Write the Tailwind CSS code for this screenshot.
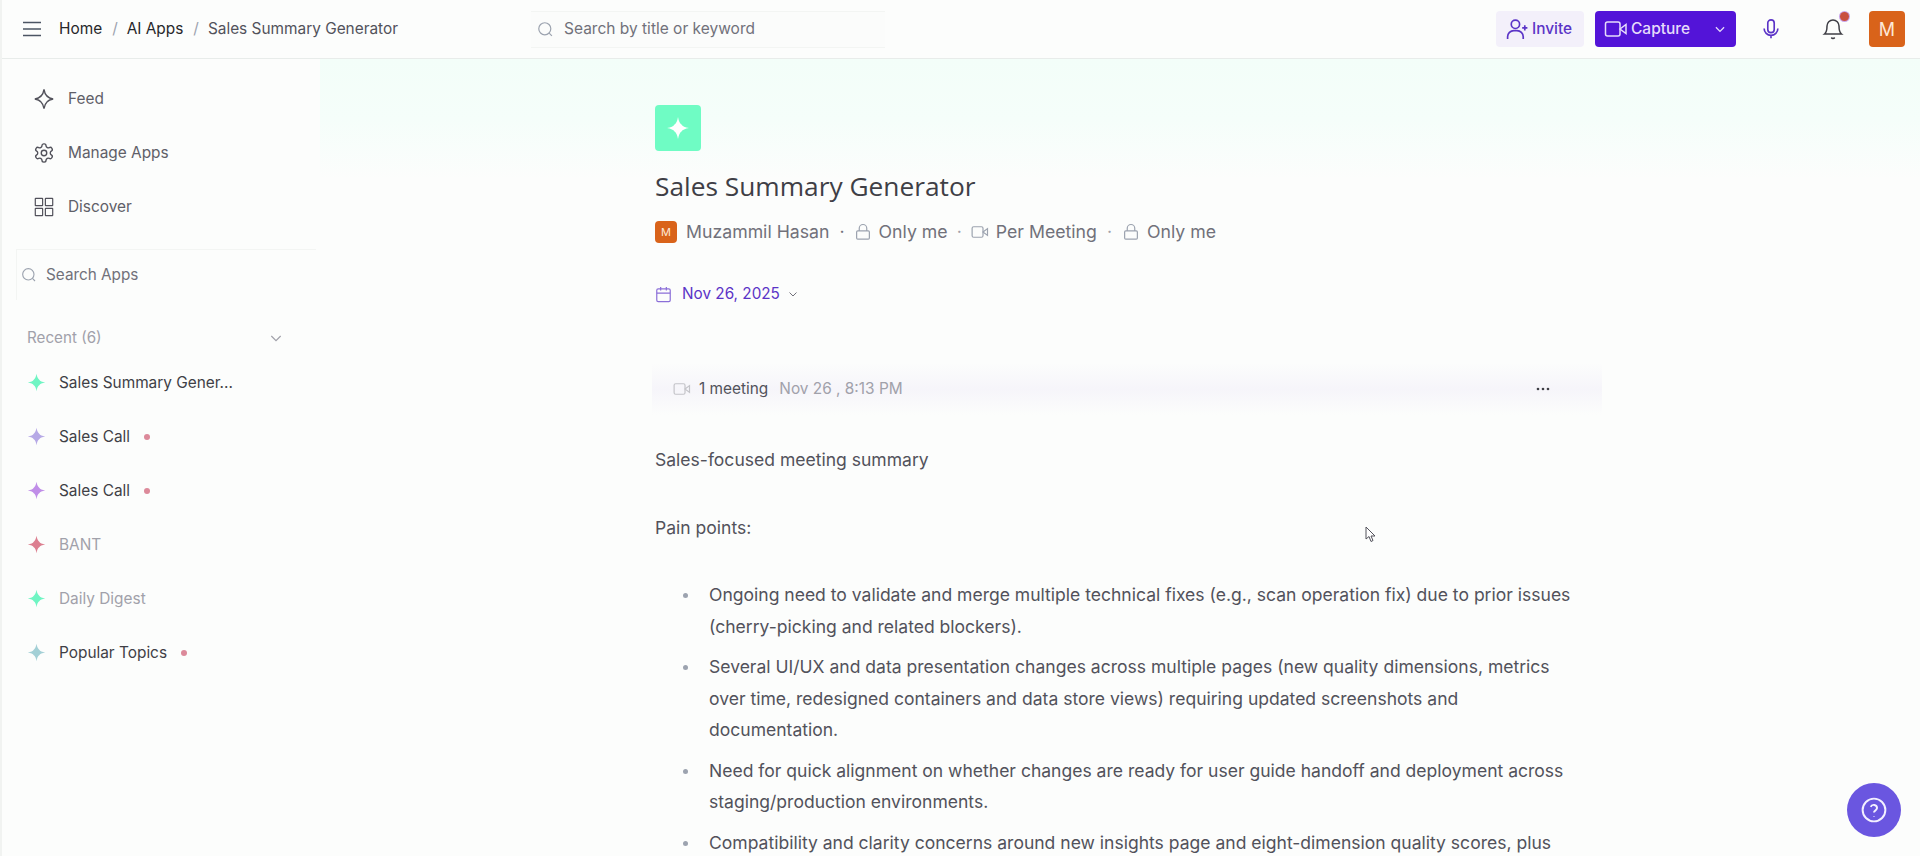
<!DOCTYPE html>
<html lang="en">
<head>
    <meta charset="UTF-8">
    <meta name="viewport" content="width=device-width, initial-scale=1.0">
    <title>Sales Summary Generator</title>
    <script src="https://cdn.jsdelivr.net/npm/@tailwindcss/browser@4"></script>
</head>
<body class="bg-[#fcfdfc] font-['Inter',sans-serif] text-[#3f3f46] h-screen overflow-hidden">
    <div class="relative h-[856px] overflow-hidden border-l-2 border-[#f1f3f1]">
        <!-- Top bar -->
        <header class="h-[59px] flex items-center border-b border-[#e8ecea] pl-[20px] pr-[15px]">
            <svg class="w-[20px] h-[20px] text-[#4b5563]" viewBox="0 0 20 20" fill="none" stroke="currentColor" stroke-width="1.3"><path d="M1 3.5h18M1 10h18M1 16.5h18"/></svg>
            <nav class="flex items-center ml-[17px] text-[15.400px] w-[472px]">
                <span class="text-[#27272a]">Home</span>
                <span class="ml-[10px] mr-[9px] text-[#9ca3af]">/</span>
                <span class="text-[#27272a]">AI Apps</span>
                <span class="ml-[10px] mr-[9px] text-[#9ca3af]">/</span>
                <span class="text-[#52525b]">Sales Summary Generator</span>
            </nav>
            <div class="flex items-center w-[354px] h-[37px] pl-[6px] border-t border-[#f3f5f3] border-b bg-[#fbfcfb]">
                <svg class="w-[17px] h-[17px] text-[#9ca3af]" viewBox="0 0 24 24" fill="none" stroke="currentColor" stroke-width="1.7"><circle cx="11" cy="11" r="8.5"/><path d="m21 21-3.8-3.8"/></svg>
                <span class="ml-[10px] text-[15.500px] text-[#71717a]">Search by title or keyword</span>
            </div>
            <div class="ml-auto flex items-center">
                <button class="flex items-center h-[36px] w-[88px] pl-[9px] rounded bg-[#f3f0fa] text-[#5b34c7] text-[15.400px] font-medium">
                    <svg class="w-[25px] h-[25px]" viewBox="0 0 24 24" fill="none" stroke="currentColor" stroke-width="1.6"><circle cx="10" cy="7" r="4"/><path d="M2.5 21v-2a6 6 0 0 1 6-6h3a6 6 0 0 1 6 6v2"/><path d="M19 8v5M16.5 10.500h5"/></svg>
                    <span class="ml-[2px]">Invite</span>
                </button>
                <div class="flex items-center h-[36px] w-[141px] ml-[11px] rounded bg-[#5314d8] text-[#e6dcfb] text-[15.500px] font-medium">
                    <svg class="w-[24px] h-[24px] ml-[9px]" viewBox="0 0 24 24" fill="none" stroke="currentColor" stroke-width="1.5"><rect x="1.500" y="5" width="14.500" height="14" rx="2"/><path d="m16 12 6-4.500v9z"/></svg>
                    <span class="ml-[3px]">Capture</span>
                    <svg class="w-[14px] h-[14px] ml-auto mr-[9px]" viewBox="0 0 24 24" fill="none" stroke="currentColor" stroke-width="2.200"><path d="m5 9 7 7 7-7"/></svg>
                </div>
                <svg class="w-[22px] h-[22px] ml-[24px] text-[#5b34c7]" viewBox="0 0 24 24" fill="none" stroke="currentColor" stroke-width="1.800"><rect x="8.500" y="2" width="7" height="14" rx="3.500"/><path d="M4.500 11.500a7.500 7.500 0 0 0 15 0M12 19v3"/></svg>
                <div class="relative ml-[39px]">
                    <svg class="w-[24px] h-[24px] text-[#3f3f46]" viewBox="0 0 24 24" fill="none" stroke="currentColor" stroke-width="1.500"><path d="M6 9a6 6 0 0 1 12 0c0 6 2.500 8 2.500 8h-17S6 15 6 9"/><path d="M10.300 20.500a2 2 0 0 0 3.400 0"/></svg>
                    <span class="absolute -top-[5px] right-[-4px] w-[9px] h-[9px] rounded-full bg-[#c9503f] ring-1 ring-[#c9a4e8]"></span>
                </div>
                <div class="w-[36px] h-[36px] ml-[24px] rounded bg-[#d9631a] text-[#fde8d7] text-[18px] flex items-center justify-center">M</div>
            </div>
        </header>

        <div class="flex h-[797px]">
            <!-- Sidebar -->
            <aside class="w-[318px] shrink-0 pt-[13px]">
                <ul class="pl-[31px] text-[15.400px] text-[#5f6068]">
                    <li class="h-[54px] flex items-center">
                        <svg class="w-[22px] h-[22px] text-[#52525b]" viewBox="0 0 24 24" fill="none" stroke="currentColor" stroke-width="1.500"><path d="M12 1.500c.9 6.300 3.700 9.600 10 10.500-6.300.9-9.100 4.200-10 10.500-.9-6.300-3.700-9.600-10-10.500 6.300-.9 9.100-4.200 10-10.500z"/></svg>
                        <span class="ml-[13px]">Feed</span>
                    </li>
                    <li class="h-[54px] flex items-center">
                        <svg class="w-[22px] h-[22px] text-[#52525b]" viewBox="0 0 24 24" fill="none" stroke="currentColor" stroke-width="1.500"><path d="M12.220 2h-.44a2 2 0 0 0-2 2v.18a2 2 0 0 1-1 1.730l-.43.250a2 2 0 0 1-2 0l-.15-.080a2 2 0 0 0-2.730.730l-.22.380a2 2 0 0 0 .730 2.730l.15.100a2 2 0 0 1 1 1.720v.510a2 2 0 0 1-1 1.740l-.15.090a2 2 0 0 0-.730 2.730l.22.380a2 2 0 0 0 2.730.730l.15-.080a2 2 0 0 1 2 0l.43.250a2 2 0 0 1 1 1.730V20a2 2 0 0 0 2 2h.44a2 2 0 0 0 2-2v-.18a2 2 0 0 1 1-1.730l.43-.250a2 2 0 0 1 2 0l.15.080a2 2 0 0 0 2.730-.730l.22-.390a2 2 0 0 0-.730-2.730l-.15-.080a2 2 0 0 1-1-1.740v-.500a2 2 0 0 1 1-1.740l.15-.090a2 2 0 0 0 .730-2.730l-.22-.380a2 2 0 0 0-2.730-.730l-.15.080a2 2 0 0 1-2 0l-.43-.250a2 2 0 0 1-1-1.730V4a2 2 0 0 0-2-2z"/><circle cx="12" cy="12" r="3"/></svg>
                        <span class="ml-[13px]">Manage Apps</span>
                    </li>
                    <li class="h-[54px] flex items-center">
                        <svg class="w-[22px] h-[22px] text-[#52525b]" viewBox="0 0 24 24" fill="none" stroke="currentColor" stroke-width="1.300"><rect x="2.500" y="2.500" width="8" height="8" rx=".5"/><rect x="13.500" y="2.500" width="8" height="8" rx=".5"/><rect x="2.500" y="13.500" width="8" height="8" rx=".5"/><rect x="13.500" y="13.500" width="8" height="8" rx=".5"/></svg>
                        <span class="ml-[13px]">Discover</span>
                    </li>
                </ul>
                <div class="ml-[14px] mt-[15px] w-[300px] h-[51px] flex items-center pl-[4px] border-t border-l border-[#f3f5f3]">
                    <svg class="w-[16px] h-[16px] text-[#9ca3af]" viewBox="0 0 24 24" fill="none" stroke="currentColor" stroke-width="1.700"><circle cx="11" cy="11" r="8.500"/><path d="m21 21-3.800-3.800"/></svg>
                    <span class="ml-[9px] text-[15.300px] text-[#71717a]">Search Apps</span>
                </div>
                <div class="flex items-center justify-between pl-[25px] pr-[36px] mt-[27px] text-[15.200px] text-[#a1a1aa]">
                    <span>Recent (6)</span>
                    <svg class="w-[16px] h-[16px]" viewBox="0 0 24 24" fill="none" stroke="currentColor" stroke-width="1.800"><path d="m5 9 7 7 7-7"/></svg>
                </div>
                <ul class="pl-[25px] mt-[6px] text-[15.400px]">
                    <li class="h-[54px] flex items-center text-[#3f3f46]">
                        <svg class="w-[19px] h-[19px] text-[#6ff5c3] mr-[13px]" viewBox="0 0 24 24" fill="currentColor"><path d="M12 1Q13 7 15.500 8.500 17 11 23 12 17 13 15.500 15.500 13 17 12 23 11 17 8.500 15.500 7 13 1 12 7 11 8.500 8.500 11 7 12 1z"/></svg>
                        <span>Sales Summary Gener...</span>
                    </li>
                    <li class="h-[54px] flex items-center text-[#3f3f46]">
                        <svg class="w-[19px] h-[19px] text-[#b6a9e6] mr-[13px]" viewBox="0 0 24 24" fill="currentColor"><path d="M12 1Q13 7 15.500 8.500 17 11 23 12 17 13 15.500 15.500 13 17 12 23 11 17 8.500 15.500 7 13 1 12 7 11 8.500 8.500 11 7 12 1z"/></svg>
                        <span>Sales Call</span>
                        <span class="ml-[14px] w-[6px] h-[6px] rounded-full bg-[#dc8a9a]"></span>
                    </li>
                    <li class="h-[54px] flex items-center text-[#3f3f46]">
                        <svg class="w-[19px] h-[19px] text-[#c08ee8] mr-[13px]" viewBox="0 0 24 24" fill="currentColor"><path d="M12 1Q13 7 15.500 8.500 17 11 23 12 17 13 15.500 15.500 13 17 12 23 11 17 8.500 15.500 7 13 1 12 7 11 8.500 8.500 11 7 12 1z"/></svg>
                        <span>Sales Call</span>
                        <span class="ml-[14px] w-[6px] h-[6px] rounded-full bg-[#dc8a9a]"></span>
                    </li>
                    <li class="h-[54px] flex items-center text-[#a1a1aa]">
                        <svg class="w-[19px] h-[19px] text-[#dc7f90] mr-[13px]" viewBox="0 0 24 24" fill="currentColor"><path d="M12 1Q13 7 15.500 8.500 17 11 23 12 17 13 15.500 15.500 13 17 12 23 11 17 8.500 15.500 7 13 1 12 7 11 8.500 8.500 11 7 12 1z"/></svg>
                        <span>BANT</span>
                    </li>
                    <li class="h-[54px] flex items-center text-[#a1a1aa]">
                        <svg class="w-[19px] h-[19px] text-[#6ff5c3] mr-[13px]" viewBox="0 0 24 24" fill="currentColor"><path d="M12 1Q13 7 15.500 8.500 17 11 23 12 17 13 15.500 15.500 13 17 12 23 11 17 8.500 15.500 7 13 1 12 7 11 8.500 8.500 11 7 12 1z"/></svg>
                        <span>Daily Digest</span>
                    </li>
                    <li class="h-[54px] flex items-center text-[#3f3f46]">
                        <svg class="w-[19px] h-[19px] text-[#a3d0d6] mr-[13px]" viewBox="0 0 24 24" fill="currentColor"><path d="M12 1Q13 7 15.500 8.500 17 11 23 12 17 13 15.500 15.500 13 17 12 23 11 17 8.500 15.500 7 13 1 12 7 11 8.500 8.500 11 7 12 1z"/></svg>
                        <span>Popular Topics</span>
                        <span class="ml-[14px] w-[6px] h-[6px] rounded-full bg-[#dc8a9a]"></span>
                    </li>
                </ul>
            </aside>

            <!-- Main -->
            <main class="flex-1 pl-[335px] pt-[46px] bg-[linear-gradient(to_bottom,#f3fef9_0px,#f5fefa_60px,#fcfdfc_120px)]">
                <div class="w-[46px] h-[46px] rounded bg-[#6ffcc4] flex items-center justify-center">
                    <svg class="w-[24px] h-[24px] text-white" viewBox="0 0 24 24" fill="currentColor"><path d="M12 1Q13 7 15.500 8.500 17 11 23 12 17 13 15.500 15.500 13 17 12 23 11 17 8.500 15.500 7 13 1 12 7 11 8.500 8.500 11 7 12 1z"/></svg>
                </div>
                <h1 class="mt-[19px] text-[26.300px] leading-[32px] text-[#3f3f46] font-['Open_Sans',sans-serif]">Sales Summary Generator</h1>
                <div class="flex items-center mt-[16px] h-[28px] text-[17.700px] text-[#71717a]">
                    <span class="w-[22px] h-[22px] rounded bg-[#d9631a] text-[#fde8d7] text-[11px] flex items-center justify-center">M</span>
                    <span class="ml-[9px]">Muzammil Hasan</span>
                    <span class="ml-[10px] mr-[9px]">·</span>
                    <svg class="w-[18px] h-[18px] text-[#9ca3af]" viewBox="0 0 24 24" fill="none" stroke="currentColor" stroke-width="1.600"><rect x="3.500" y="10.500" width="17" height="11" rx="1.500"/><path d="M7 10.500V7a5 5 0 0 1 10 0v3.500"/></svg>
                    <span class="ml-[7px]">Only me</span>
                    <span class="mx-[9px] text-[#a1a1aa]">·</span>
                    <svg class="w-[18px] h-[18px] text-[#9ca3af]" viewBox="0 0 24 24" fill="none" stroke="currentColor" stroke-width="1.600"><rect x="1.500" y="5" width="14.500" height="14" rx="2"/><path d="m16 12 6-4.500v9z"/></svg>
                    <span class="ml-[7px]">Per Meeting</span>
                    <span class="mx-[10px] text-[#a1a1aa]">·</span>
                    <svg class="w-[18px] h-[18px] text-[#9ca3af]" viewBox="0 0 24 24" fill="none" stroke="currentColor" stroke-width="1.600"><rect x="3.500" y="10.500" width="17" height="11" rx="1.500"/><path d="M7 10.500V7a5 5 0 0 1 10 0v3.500"/></svg>
                    <span class="ml-[7px]">Only me</span>
                </div>
                <div class="flex items-center mt-[36px] h-[24px] text-[15.300px] text-[#5b34c7]">
                    <svg class="w-[17px] h-[17px] text-[#8b6fd8]" viewBox="0 0 24 24" fill="none" stroke="currentColor" stroke-width="1.700"><rect x="2.500" y="4" width="19" height="18" rx="2"/><path d="M2.500 10h19M8 1.500v5M16 1.500v5"/></svg>
                    <span class="ml-[10px]">Nov 26, 2025</span>
                    <svg class="w-[12px] h-[12px] ml-[7px] text-[#71717a]" viewBox="0 0 24 24" fill="none" stroke="currentColor" stroke-width="2"><path d="m5 9 7 7 7-7"/></svg>
                </div>
                <div class="flex items-center mt-[57px] w-[950px] h-[52px] pl-[21px] pr-[51px] -ml-[3px] text-[15.400px] bg-[linear-gradient(to_bottom,#fcfdfc,#f6f5fa,#fcfdfc)]">
                    <svg class="w-[18px] h-[18px] text-[#c4c4c9]" viewBox="0 0 24 24" fill="none" stroke="currentColor" stroke-width="1.600"><rect x="1.500" y="5" width="14.500" height="14" rx="2"/><path d="m16 12 6-4.500v9z"/></svg>
                    <span class="ml-[8px] text-[#52525b]">1 meeting</span>
                    <span class="ml-[11px] text-[#a1a1aa]">Nov 26 , 8:13 PM</span>
                    <svg class="ml-auto w-[16px] h-[16px] text-[#3f3f46]" viewBox="0 0 24 24" fill="currentColor"><circle cx="4.500" cy="12" r="2"/><circle cx="12" cy="12" r="2"/><circle cx="19.500" cy="12" r="2"/></svg>
                </div>
                <div class="mt-[29px] text-[17.550px] leading-[31.500px] text-[#52525b] w-[930px]">
                    <p>Sales-focused meeting summary</p>
                    <p class="mt-[36px]">Pain points:</p>
                    <ul class="mt-[36px] flex flex-col gap-[9px]">
                        <li class="flex">
                            <span class="w-[5px] h-[5px] mt-[14px] ml-[28px] mr-[21px] shrink-0 rounded-full bg-[#9ca3af]"></span>
                            <span>Ongoing need to validate and merge multiple technical fixes (e.g., scan operation fix) due to prior issues (cherry-picking and related blockers).</span>
                        </li>
                        <li class="flex">
                            <span class="w-[5px] h-[5px] mt-[14px] ml-[28px] mr-[21px] shrink-0 rounded-full bg-[#9ca3af]"></span>
                            <span>Several UI/UX and data presentation changes across multiple pages (new quality dimensions, metrics over time, redesigned containers and data store views) requiring updated screenshots and documentation.</span>
                        </li>
                        <li class="flex">
                            <span class="w-[5px] h-[5px] mt-[14px] ml-[28px] mr-[21px] shrink-0 rounded-full bg-[#9ca3af]"></span>
                            <span>Need for quick alignment on whether changes are ready for user guide handoff and deployment across staging/production environments.</span>
                        </li>
                        <li class="flex">
                            <span class="w-[5px] h-[5px] mt-[14px] ml-[28px] mr-[21px] shrink-0 rounded-full bg-[#9ca3af]"></span>
                            <span>Compatibility and clarity concerns around new insights page and eight-dimension quality scores, plus</span>
                        </li>
                    </ul>
                </div>
            </main>
        </div>

        <!-- Mouse cursor -->
        <svg class="absolute left-[1363px] top-[526px] w-[12px] h-[18px] text-[#52525b]" viewBox="0 0 12 18" fill="#ffffff" stroke="currentColor" stroke-width="1"><path d="M1 1v12l3-2.500 2 5 2-1-2-4.500h4z"/></svg>

        <!-- Help button -->
        <button class="absolute left-[1845px] top-[783px] w-[54px] h-[54px] rounded-full bg-[#6a56e0] flex items-center justify-center">
            <svg class="w-[26px] h-[26px] text-[#f3f0ff]" viewBox="0 0 24 24" fill="none" stroke="currentColor" stroke-width="1.800"><circle cx="12" cy="12" r="10.500"/><path d="M9 9.200a3 3 0 0 1 5.800 1c0 2-2.800 2.400-2.800 4"/><path d="M12 17.500v.5"/></svg>
        </button>
    </div>
</body>
</html>
